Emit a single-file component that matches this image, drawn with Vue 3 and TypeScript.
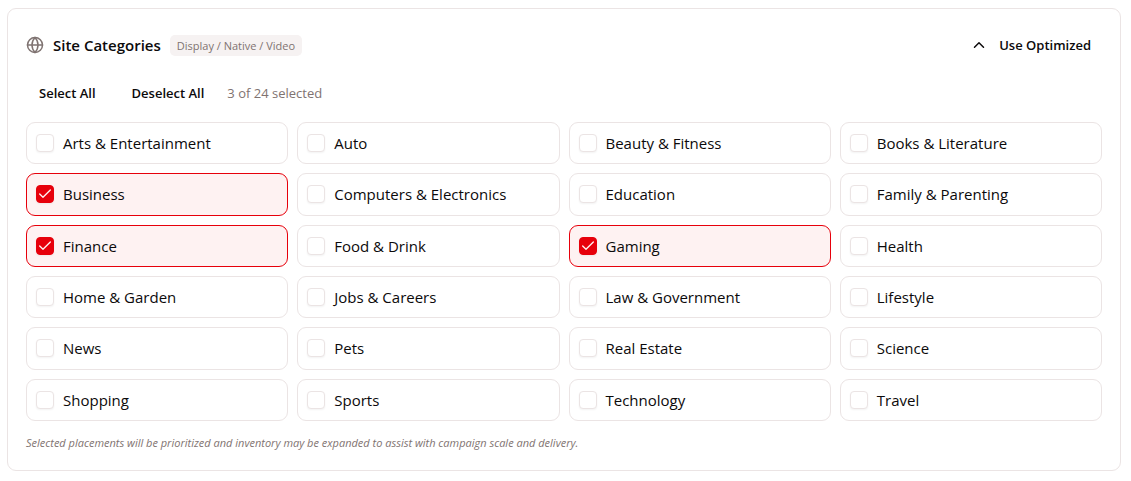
<script setup lang="ts">
import { computed, ref } from 'vue'

const categories: string[] = [
  'Arts & Entertainment', 'Auto', 'Beauty & Fitness', 'Books & Literature',
  'Business', 'Computers & Electronics', 'Education', 'Family & Parenting',
  'Finance', 'Food & Drink', 'Gaming', 'Health',
  'Home & Garden', 'Jobs & Careers', 'Law & Government', 'Lifestyle',
  'News', 'Pets', 'Real Estate', 'Science',
  'Shopping', 'Sports', 'Technology', 'Travel',
]

const selected = ref<string[]>(['Business', 'Finance', 'Gaming'])
const open = ref(true)
const summary = computed(() => `${selected.value.length} of ${categories.length} selected`)

function selectAll(): void {
  selected.value = [...categories]
}

function deselectAll(): void {
  selected.value = []
}
</script>

<template>
  <section class="panel">
    <header class="head">
      <svg class="globe" viewBox="0 0 24 24" aria-hidden="true">
        <circle cx="12" cy="12" r="10" />
        <path d="M12 2a14.5 14.5 0 0 0 0 20 14.5 14.5 0 0 0 0-20" />
        <path d="M2 12h20" />
      </svg>
      <h2 class="title">Site Categories</h2>
      <span class="badge">Display / Native / Video</span>
      <div class="head-actions">
        <button class="toggle" type="button" aria-label="Toggle categories" :aria-expanded="open" @click="open = !open">
          <svg class="chevron" viewBox="0 0 24 24" aria-hidden="true">
            <path d="m18 15-6-6-6 6" />
          </svg>
        </button>
        <button class="text-button" type="button" @click="deselectAll">Use Optimized</button>
      </div>
    </header>

    <template v-if="open">
      <div class="toolbar">
        <button class="text-button" type="button" @click="selectAll">Select All</button>
        <button class="text-button" type="button" @click="deselectAll">Deselect All</button>
        <span class="count">{{ summary }}</span>
      </div>

      <div class="grid">
        <label v-for="name in categories" :key="name" class="tile" :class="{ on: selected.includes(name) }">
          <span class="box">
            <input v-model="selected" class="check" type="checkbox" :value="name" />
            <svg v-if="selected.includes(name)" class="tick" viewBox="0 0 24 24" aria-hidden="true">
              <path d="M20 6 9 17l-5-5" />
            </svg>
          </span>
          <span>{{ name }}</span>
        </label>
      </div>

      <p class="note">Selected placements will be prioritized and inventory may be expanded to assist with campaign scale and delivery.</p>
    </template>
  </section>
</template>

<style>
body {
  margin: 0;
  background: #fff;
}
</style>

<style scoped>
.panel {
  box-sizing: border-box;
  margin: 8px 10px 10px 7px;
  padding: 18px;
  border: 1px solid #ebe4e4;
  border-radius: 9px;
  background: #fff;
  color: #0c0a0b;
  font-family: "Segoe UI", "Open Sans", "Noto Sans", sans-serif;
}

.head {
  display: flex;
  align-items: center;
  height: 36px;
}

.globe {
  width: 18px;
  height: 18px;
  margin-right: 9px;
  fill: none;
  stroke: #7f7371;
  stroke-width: 2;
  stroke-linecap: round;
  stroke-linejoin: round;
}

.title {
  margin: 0 9px 0 0;
  font-size: 15px;
  line-height: 24px;
  font-weight: 600;
}

.badge {
  padding: 0 7px;
  border-radius: 5px;
  background: #f6f2f2;
  color: #7f7371;
  font-size: 11px;
  line-height: 21px;
}

.head-actions {
  display: flex;
  align-items: center;
  margin-left: auto;
  padding-right: 11px;
}

.toggle,
.text-button {
  padding: 0;
  border: 0;
  background: none;
  color: inherit;
  font: inherit;
  cursor: pointer;
}

.text-button {
  font-size: 13px;
  line-height: 20px;
  font-weight: 600;
}

.toggle {
  display: flex;
  margin-right: 11px;
}

.chevron {
  width: 18px;
  height: 18px;
  fill: none;
  stroke: currentColor;
  stroke-width: 2;
  stroke-linecap: round;
  stroke-linejoin: round;
}

.toolbar {
  display: flex;
  align-items: center;
  height: 36px;
  margin-top: 12px;
  padding-left: 13px;
}

.toolbar .text-button {
  margin-right: 36px;
}

.toolbar .text-button + .text-button {
  margin-right: 23px;
}

.count {
  color: #7f7371;
  font-size: 13px;
  line-height: 20px;
}

.grid {
  display: grid;
  grid-template-columns: repeat(4, minmax(0, 1fr));
  grid-auto-rows: 1fr;
  gap: 9px;
  min-height: 299px;
  margin-top: 11px;
}

.tile {
  display: flex;
  align-items: center;
  gap: 9px;
  padding: 0 9px;
  border: 1px solid #ebe4e4;
  border-radius: 9px;
  font-size: 15px;
  line-height: 24px;
  cursor: pointer;
}

.tile.on {
  border-color: #e7000b;
  background: #fef2f2;
}

.box {
  display: grid;
  flex: none;
  width: 18px;
  height: 18px;
}

.check,
.tick {
  grid-area: 1 / 1;
}

.check {
  box-sizing: border-box;
  appearance: none;
  width: 18px;
  height: 18px;
  margin: 0;
  border: 1px solid #ebe4e4;
  border-radius: 4px;
  background: #fff;
  box-shadow: 0 1px 2px rgba(0, 0, 0, 0.05);
}

.check:checked {
  border-color: #e7000b;
  background: #e7000b;
}

.tick {
  place-self: center;
  width: 16px;
  height: 16px;
  fill: none;
  stroke: #fef2f2;
  stroke-width: 2;
  stroke-linecap: round;
  stroke-linejoin: round;
  pointer-events: none;
}

.note {
  margin: 13px 0 0;
  color: #7f7371;
  font-size: 11px;
  line-height: 18px;
  font-style: italic;
}
</style>
